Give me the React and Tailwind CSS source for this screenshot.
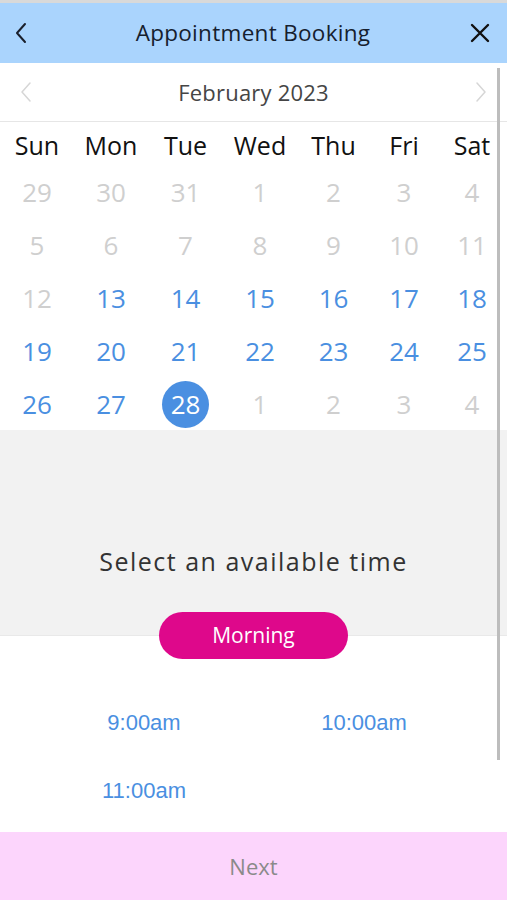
import React from "react";

const weeks = [
  [["29", 0], ["30", 0], ["31", 0], ["1", 0], ["2", 0], ["3", 0], ["4", 0]],
  [["5", 0], ["6", 0], ["7", 0], ["8", 0], ["9", 0], ["10", 0], ["11", 0]],
  [["12", 0], ["13", 1], ["14", 1], ["15", 1], ["16", 1], ["17", 1], ["18", 1]],
  [["19", 1], ["20", 1], ["21", 1], ["22", 1], ["23", 1], ["24", 1], ["25", 1]],
  [["26", 1], ["27", 1], ["28", 2], ["1", 0], ["2", 0], ["3", 0], ["4", 0]],
];

const days = ["Sun", "Mon", "Tue", "Wed", "Thu", "Fri", "Sat"];
const times = ["9:00am", "10:00am", "11:00am", ""];

const cols = "grid grid-cols-[74px_74px_75px_74px_73px_68px_68px]";

export default function App() {
  return (
    <div
      className="w-[507px] h-[900px] flex flex-col bg-white overflow-hidden"
      style={{ fontFamily: '"Open Sans", "Noto Sans", sans-serif' }}
    >
      <div className="h-[3px] bg-[#d9d9d9] shrink-0" />
      <header className="h-[60px] shrink-0 bg-[#aad4fd] flex items-center justify-between px-[13px]">
        <svg width="16" height="24" viewBox="0 0 16 24" fill="none">
          <path d="M12 3 L4 12 L12 21" stroke="#1a1f2b" strokeWidth="2" strokeLinecap="round" strokeLinejoin="round" />
        </svg>
        <div className="text-[22.5px] text-[#16202e] tracking-[0.3px] ml-[8px]">Appointment Booking</div>
        <svg width="22" height="22" viewBox="0 0 22 22" fill="none" className="mr-[3px]">
          <path d="M3 3 L19 19 M19 3 L3 19" stroke="#111" strokeWidth="2.4" strokeLinecap="round" />
        </svg>
      </header>

      <div className="relative flex-1 overflow-hidden">
        <div className="h-[59px] flex items-center justify-between px-[19px] border-b border-[#e6e6e6]">
          <svg width="14" height="22" viewBox="0 0 14 22" fill="none">
            <path d="M11 2 L3 11 L11 20" stroke="#d6d6d6" strokeWidth="1.5" strokeLinecap="round" strokeLinejoin="round" />
          </svg>
          <div className="text-[22px] text-[#454545] tracking-[0.2px]">February 2023</div>
          <svg width="14" height="22" viewBox="0 0 14 22" fill="none">
            <path d="M3 2 L11 11 L3 20" stroke="#d6d6d6" strokeWidth="1.5" strokeLinecap="round" strokeLinejoin="round" />
          </svg>
        </div>

        <div className={`${cols} h-[44px] items-center pt-[4px]`}>
          {days.map((d) => (
            <div key={d} className="text-center text-[25px] text-[#111]">{d}</div>
          ))}
        </div>

        {weeks.map((w, i) => (
          <div key={i} className={`${cols} h-[52.9px] items-center`}>
            {w.map(([n, s], j) => (
              <div key={j} className="flex justify-center">
                {s === 2 ? (
                  <div className="w-[47px] h-[47px] rounded-full bg-[#4a8fe1] text-white text-[26px] flex items-center justify-center">
                    {n}
                  </div>
                ) : (
                  <div className={`text-[26px] ${s === 1 ? "text-[#4a8fe1]" : "text-[#cfcfcf]"}`}>{n}</div>
                )}
              </div>
            ))}
          </div>
        ))}

        <div className="h-[206px] bg-[#f2f2f2] border-b border-[#e9e9e9] flex flex-col items-center justify-end">
          <div className="text-[25px] text-[#333] tracking-[1.5px] mb-[55px]">Select an available time</div>
        </div>
        <div className="flex justify-center -mt-[24px] relative">
          <div className="w-[189px] h-[47px] rounded-full bg-[#de088b] text-white text-[21px] flex items-center justify-center">
            Morning
          </div>
        </div>

        <div
          className="grid grid-cols-[220px_220px] ml-[34px] mt-[29px] auto-rows-[68px]"
          style={{ fontFamily: '"Liberation Sans", Arial, sans-serif' }}
        >
          {times.map((t, i) => (
            <div key={i} className="flex items-center justify-center text-[22px] text-[#4a8fe1]">{t}</div>
          ))}
        </div>

        <div className="absolute right-[7px] top-[5px] w-[3px] h-[692px] bg-[#bdbdbd]" />
      </div>

      <footer className="h-[68px] shrink-0 bg-[#fcd5fc] flex items-center justify-center">
        <div className="text-[22px] text-[#8a8a8a]">Next</div>
      </footer>
    </div>
  );
}
